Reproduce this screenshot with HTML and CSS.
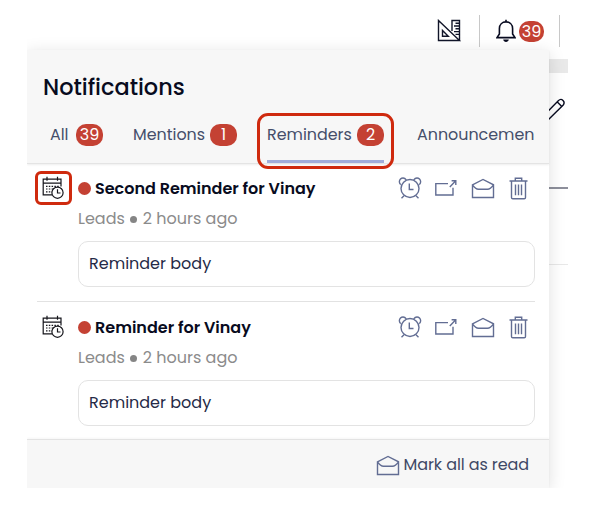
FILE: index.html
```html
<!DOCTYPE html>
<html lang="en">
<head>
<meta charset="utf-8">
<title>Notifications</title>
<link rel="stylesheet" href="styles.css">
</head>
<body>
<svg class="defs" aria-hidden="true">
  <symbol id="calendar" viewBox="0 0 22 24">
    <path d="M10 18.8H1.2V3.2H19V10.5M1.2 7.2H19M5 .8v4M15.5 .8v4"/>
    <path d="M4 10.3h13M4 13h7M4 15.8h6" stroke-dasharray="1.5 1.3"/>
    <circle cx="15.5" cy="16.7" r="5.6" fill="#fff"/><path d="M15.5 13.2v3.8h3"/>
  </symbol>
  <symbol id="alarm" viewBox="0 0 24 22">
    <circle cx="12" cy="11.5" r="9"/><path d="M11.3 6.5v6h4.2M6 18.7l-2.5 2.5M18 18.7l2.5 2.5M2.7 7.6C-1.2 4.5 4.2-2.4 8.3 2.9M15.7 2.9C19.8-2.4 25.2 4.5 21.3 7.6"/>
  </symbol>
  <symbol id="share" viewBox="0 0 22 18">
    <path d="M13 4.6H.8V16H18V8.8M14.8 8 20.3 2.3M16.6 1.8h4.2v4.3"/>
  </symbol>
  <symbol id="mail" viewBox="0 0 24 21">
    <path d="M1.5 6.8 12 1.5 22.5 6.8V19.5H1.5ZM1.5 6.8Q4.5 11.2 7.5 11.2H16.5Q19.5 11.2 22.5 6.8"/>
  </symbol>
  <symbol id="trash" viewBox="0 0 19 23">
    <path d="M.5 4H18.5M6.3 4V1.2h6.4V4M2.5 4V20.5q0 1.3 1.3 1.3H15.2q1.3 0 1.3-1.3V4M6.5 7.5v10.8M9.5 7.5v10.8M12.5 7.5v10.8"/>
  </symbol>
</svg>
<div class="app">
  <header class="topbar">
    <svg class="design" viewBox="0 0 24 24"><path d="M1.5 1.5V21.5H22.5ZM5.5 11.5V17.3H11.3ZM15 12V1.5H22.5V21.5M18.5 4.2h4M17 7h5.5M18.5 9.8h4M17 12.6h5.5M18.5 15.4h4"/></svg>
    <i class="rule"></i>
    <svg class="bell" viewBox="0 0 20 24"><path d="M1 18.6H19L16.6 15V9.5C16.6 5.5 13.8 2.9 10 2.9S3.4 5.5 3.4 9.5V15ZM10 .8V3"/><path class="solid" d="M7.2 20.5H12.8C12.5 23.8 7.5 23.8 7.2 20.5Z"/></svg>
    <span class="badge count">39</span>
    <i class="rule end"></i>
  </header>
  <div class="page">
    <div class="band"></div>
    <div class="edit"><svg class="pencil" viewBox="0 0 19 22"><path d="M0 14.2 11.3 2.7Q13.8 .2 16 2.4T16 7.2L1 22M10.3 3.9 14.8 8.4"/></svg></div>
    <div class="section"></div>
  </div>
  <section class="panel">
    <div class="head">
      <h1>Notifications</h1>
      <nav class="tabs">
        <div class="tab"><span>All</span><b class="badge">39</b></div>
        <div class="tab"><span>Mentions</span><b class="badge">1</b></div>
        <div class="tab active"><span>Reminders</span><b class="badge">2</b></div>
        <div class="tab last"><span>Announcemen</span></div>
      </nav>
    </div>
    <article class="item">
      <div class="kind marked"><svg class="calendar"><use href="#calendar"/></svg></div>
      <div class="content">
        <div class="row"><i class="dot"></i><h2>Second Reminder for Vinay</h2>
          <div class="actions"><svg class="alarm"><use href="#alarm"/></svg><svg class="share"><use href="#share"/></svg><svg class="mail"><use href="#mail"/></svg><svg class="trash"><use href="#trash"/></svg></div>
        </div>
        <p class="meta">Leads <i></i> 2 hours ago</p>
        <div class="message"><span>Reminder body</span></div>
      </div>
    </article>
    <article class="item second">
      <div class="kind"><svg class="calendar"><use href="#calendar"/></svg></div>
      <div class="content">
        <div class="row"><i class="dot"></i><h2>Reminder for Vinay</h2>
          <div class="actions"><svg class="alarm"><use href="#alarm"/></svg><svg class="share"><use href="#share"/></svg><svg class="mail"><use href="#mail"/></svg><svg class="trash"><use href="#trash"/></svg></div>
        </div>
        <p class="meta">Leads <i></i> 2 hours ago</p>
        <div class="message"><span>Reminder body</span></div>
      </div>
    </article>
    <footer><svg class="mail"><use href="#mail"/></svg><span>Mark all as read</span></footer>
  </section>
</div>
</body>
</html>
```
FILE: styles.css
```css
*, *::before, *::after { box-sizing: border-box; }
body { margin: 0; background: #fff; font-family: Poppins, Inter, sans-serif; color: #080b20; }
.defs { position: absolute; width: 0; height: 0; }
svg { fill: none; stroke: currentColor; stroke-width: 1.4; flex: none; display: block; }
.app { position: relative; width: 541px; height: 488px; margin-left: 27px; overflow: hidden; }
.topbar { height: 59px; padding: 15px 8px 0 0; display: flex; justify-content: flex-end; align-items: flex-start; }
.design { width: 24px; height: 24px; margin: 4px 18px 0 0; color: #111529; }
.rule { width: 1px; height: 32px; background: #c8c8c8; }
.rule.end { margin-left: 15px; }
.bell { width: 20px; height: 24px; margin: 4px 3px 0 16px; stroke-width: 1.6; }
.solid { fill: currentColor; stroke: none; }
.badge { display: flex; align-items: center; justify-content: center; width: 27px; height: 22px; border-radius: 10px; background: #c44133; color: #fff; font-size: 16px; font-weight: 400; line-height: 22px; }
.count { width: 25px; height: 21px; margin-top: 6px; }
.page { height: 429px; }
.band { height: 14px; background: #e9e9e9; }
.edit { height: 116px; padding: 25px 2px 0 0; display: flex; justify-content: flex-end; border-bottom: 2px solid #8d8f9b; }
.pencil { width: 19px; height: 22px; }
.section { height: 76px; border-bottom: 1px solid #e8e8e8; }
.panel { position: absolute; left: 0; top: 50px; width: 522px; height: 438px; background: #fff; box-shadow: 0 3px 16px rgba(0,0,0,.13); }
.head { height: 114px; padding: 23px 15px 0 16px; background: #f7f7f7; border-bottom: 1px solid #e4e4e4; box-shadow: 0 1px 2px rgba(0,0,0,.07); }
h1 { margin: 0; font-size: 22.4px; font-weight: 500; line-height: 28px; }
.tabs { display: grid; grid-template-columns: 53px 104px 117px 1fr; column-gap: 30px; padding-left: 7px; margin-top: 22px; height: 40px; }
.tab { position: relative; height: 40px; display: flex; justify-content: space-between; align-items: flex-start; color: #454e6a; font-size: 15.9px; line-height: 24px; white-space: nowrap; }
.tab .badge { margin-top: 1px; }
.tab.active { border-bottom: 3px solid #a0acda; }
.tab.active::after { content: ""; position: absolute; left: -10px; top: -10px; width: 137px; height: 56px; border: 3px solid #cf2a0e; border-radius: 11px; z-index: 1; }
.tab.last { padding-left: 3px; }
.item { height: 138px; margin: 0 14px 0 10px; padding-top: 11px; display: grid; grid-template-columns: 41px 1fr; border-bottom: 1px solid #e2e2e2; }
.item.second { height: 137px; padding-top: 12px; border: 0; }
.kind { position: relative; padding: 1px 0 0 5px; }
.calendar { width: 22px; height: 24px; stroke-width: 1.2; color: #15151b; }
.marked::before { content: ""; position: absolute; left: -2px; top: -4px; width: 37px; height: 34px; border: 3px solid #cf2a0e; border-radius: 6px; }
.row { height: 26px; display: flex; align-items: center; }
.dot { width: 13px; height: 13px; margin-right: 4px; border-radius: 50%; background: #c44133; }
h2 { margin: 0; padding-top: 2px; font-size: 16px; font-weight: 600; line-height: 24px; white-space: nowrap; }
.actions { margin-left: auto; display: flex; align-items: center; color: #626d93; }
.alarm { width: 24px; height: 22px; margin-right: 13px; }
.share { width: 22px; height: 18px; margin-right: 14px; }
.mail { width: 24px; height: 21px; }
.actions .mail { margin-right: 14px; }
.trash { width: 19px; height: 23px; margin-right: 7px; }
.meta { margin: 7px 0 0; height: 22px; display: flex; align-items: center; font-size: 16px; line-height: 22px; color: #8b8b8b; }
.meta i { width: 7px; height: 7px; border-radius: 50%; background: #858585; margin: 1px 6px 0 5px; }
.message { margin-top: 11px; height: 46px; padding: 0 0 0 10px; border: 1px solid #e3e3e3; border-radius: 10px; display: flex; align-items: center; font-size: 16px; line-height: 24px; color: #252a47; }
footer { height: 49px; padding: 2px 20px 0 0; display: flex; align-items: center; justify-content: flex-end; gap: 4px; background: #f7f7f7; border-top: 1px solid #e3e3e3; color: #3e4865; font-size: 16px; line-height: 24px; letter-spacing: -.1px; box-shadow: 0 -1px 2px rgba(0,0,0,.04); }
footer .mail { color: #626d93; }
```
